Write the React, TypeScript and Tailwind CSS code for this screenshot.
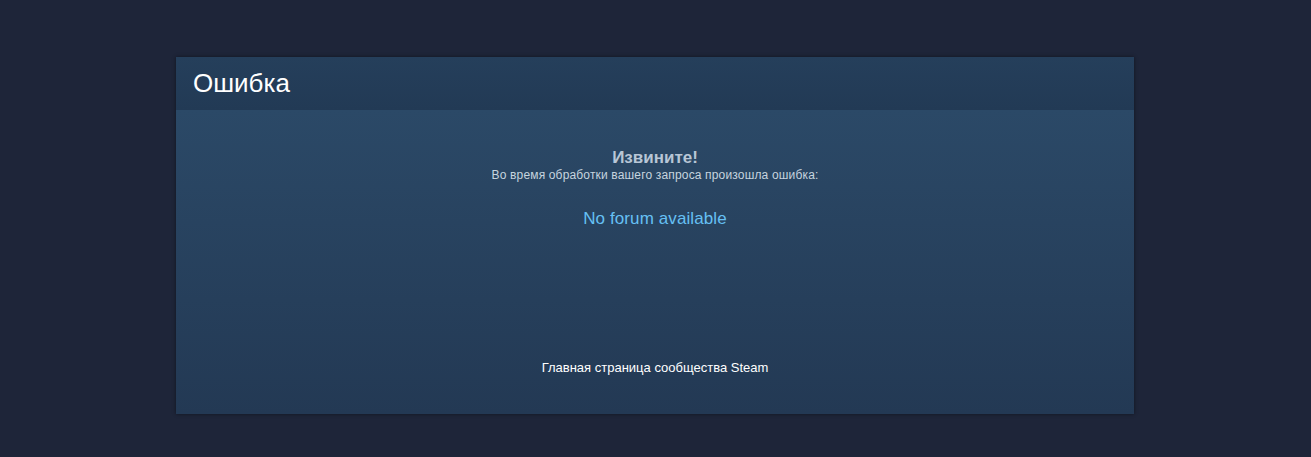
export default function App() {
  return (
    <div
      className="min-h-[457px] w-full bg-[#1e2539] pt-[57px]"
      style={{ fontFamily: '"Liberation Sans", Arial, sans-serif' }}
    >
      <div className="ml-[176px] w-[958px] shadow-[0_0_4px_rgba(0,0,0,0.45)]">
        {/* заголовок */}
        <div className="flex h-[53px] items-center bg-gradient-to-b from-[#253f5b] to-[#223a55] pb-[2px] pl-[17px]">
          <h1 className="text-[26px] font-normal leading-none text-white">Ошибка</h1>
        </div>
        {/* тело */}
        <div className="flex h-[304px] flex-col items-center bg-gradient-to-b from-[#2b4967] to-[#233954] pt-[38px] text-center">
          <h2 className="text-[17px] font-bold leading-[20px] text-[#b8c6d6]">Извините!</h2>
          <p className="text-[12px] leading-[14px] tracking-[0.16px] text-[#c6d4df]">
            Во время обработки вашего запроса произошла ошибка:
          </p>
          <div className="mt-[26px] text-[17px] leading-[21px] tracking-[0.1px] text-[#66c0f4]">
            No forum available
          </div>
          <a href="#" className="mt-[131px] text-[13px] leading-[16px] text-white">
            Главная страница сообщества Steam
          </a>
        </div>
      </div>
    </div>
  );
}
